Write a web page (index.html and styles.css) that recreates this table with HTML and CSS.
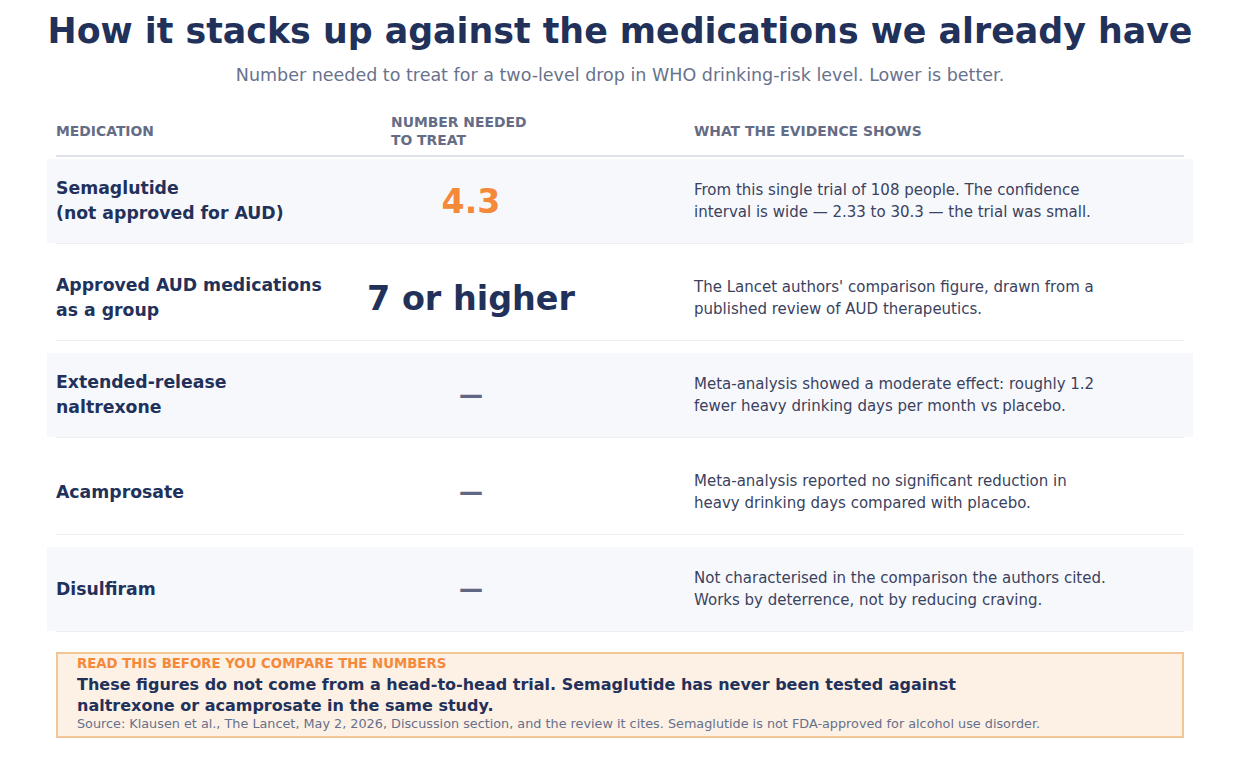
FILE: index.html
```html
<!DOCTYPE html>
<html lang="en">
<head>
<meta charset="utf-8">
<title>How it stacks up</title>
<link rel="stylesheet" href="styles.css">
</head>
<body>
<main class="page">
  <h1 class="title">How it stacks up against the medications we already have</h1>
  <p class="subtitle">Number needed to treat for a two-level drop in WHO drinking-risk level. Lower is better.</p>

  <section class="table">
    <div class="head">
      <div class="hcell">Medication</div>
      <div class="hcell hnum">Number needed<br>to treat</div>
      <div class="hcell hev">What the evidence shows</div>
    </div>

    <div class="row first">
      <div class="cells shade">
        <div class="name">Semaglutide<br>(not approved for AUD)</div>
        <div class="num orange">4.3</div>
        <div class="ev">From this single trial of 108 people. The confidence interval is wide — 2.33 to 30.3 — the trial was small.</div>
      </div>
    </div>

    <div class="row">
      <div class="cells">
        <div class="name">Approved AUD medications<br>as a group</div>
        <div class="num navy">7 or higher</div>
        <div class="ev">The Lancet authors' comparison figure, drawn from a published review of AUD therapeutics.</div>
      </div>
    </div>

    <div class="row">
      <div class="cells shade">
        <div class="name">Extended-release<br>naltrexone</div>
        <div class="num dash">—</div>
        <div class="ev">Meta-analysis showed a moderate effect: roughly 1.2 fewer heavy drinking days per month vs placebo.</div>
      </div>
    </div>

    <div class="row">
      <div class="cells">
        <div class="name">Acamprosate</div>
        <div class="num dash">—</div>
        <div class="ev">Meta-analysis reported no significant reduction in heavy drinking days compared with placebo.</div>
      </div>
    </div>

    <div class="row">
      <div class="cells shade">
        <div class="name">Disulfiram</div>
        <div class="num dash">—</div>
        <div class="ev">Not characterised in the comparison the authors cited. Works by deterrence, not by reducing craving.</div>
      </div>
    </div>
  </section>

  <aside class="note">
    <div class="note-label">Read this before you compare the numbers</div>
    <div class="note-main">These figures do not come from a head-to-head trial. Semaglutide has never been tested against naltrexone or acamprosate in the same study.</div>
    <div class="note-src">Source: Klausen et al., The Lancet, May 2, 2026, Discussion section, and the review it cites. Semaglutide is not FDA-approved for alcohol use disorder.</div>
  </aside>
</main>
</body>
</html>
```

FILE: styles.css
```css
html, body {
  margin: 0;
  padding: 0;
  background: #ffffff;
}

body {
  font-family: "DejaVu Sans", "Liberation Sans", sans-serif;
  color: #22315a;
}

.page {
  width: 1128px;
  margin: 0 auto;
  padding: 10px 0 0;
}

.title {
  margin: 0 -40px;
  text-align: center;
  font-size: 34.8px;
  line-height: 42px;
  font-weight: 700;
  color: #22315a;
  white-space: nowrap;
}

.subtitle {
  margin: 12px 0 0;
  text-align: center;
  font-size: 17.5px;
  line-height: 22px;
  color: #68728c;
}

.table {
  margin-top: 27px;
}

.head {
  display: grid;
  grid-template-columns: 335px 160px 1fr;
  align-items: center;
  padding-bottom: 6px;
  border-bottom: 2px solid #dfe1ea;
}

.hcell {
  font-size: 13.9px;
  line-height: 18px;
  font-weight: 700;
  text-transform: uppercase;
  color: #646c86;
}

.hev {
  padding-left: 143px;
}

.row {
  margin-top: 12px;
  border-bottom: 1px solid #eceef3;
}

.row.first {
  margin-top: 2px;
}

.cells {
  display: grid;
  grid-template-columns: 335px 160px 1fr;
  align-items: center;
  height: 84px;
  margin: 0 -9px;
  padding: 0 9px;
}

.cells.shade {
  background: #f7f8fc;
}

.name {
  font-size: 17.3px;
  line-height: 25px;
  font-weight: 700;
  color: #22315a;
}

.num {
  display: flex;
  justify-content: center;
  font-weight: 700;
  white-space: nowrap;
}

.orange {
  font-size: 33.2px;
  color: #f5893a;
}

.navy {
  font-size: 33.4px;
  color: #22315a;
}

.dash {
  font-size: 24px;
  color: #5f6784;
}

.ev {
  padding-left: 143px;
  max-width: 418px;
  font-size: 15px;
  line-height: 22px;
  color: #3a4260;
}

.note {
  margin-top: 20px;
  height: 80px;
  padding: 2px 19px 0;
  background: #fdf0e5;
  border: 2px solid #f1c697;
}

.note-label {
  font-size: 13.3px;
  line-height: 16px;
  font-weight: 700;
  text-transform: uppercase;
  color: #f5893a;
}

.note-main {
  margin-top: 2px;
  font-size: 16px;
  line-height: 21px;
  font-weight: 700;
  color: #22315a;
  max-width: 900px;
}

.note-src {
  font-size: 12.8px;
  line-height: 16px;
  color: #66708a;
}
```
